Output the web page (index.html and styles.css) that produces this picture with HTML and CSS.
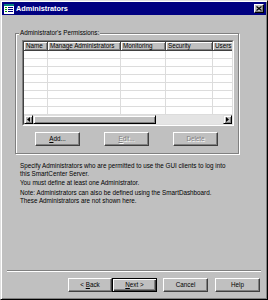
FILE: index.html
```html
<!DOCTYPE html>
<html>
<head>
<meta charset="utf-8">
<link rel="stylesheet" href="styles.css">
</head>
<body>
<div class="window">
  <div class="titlebar">
    <svg class="appicon" width="10" height="10" viewBox="0 0 10 10">
      <rect x="0" y="0" width="10" height="10" fill="#ffffff"/>
      <rect x="0" y="0" width="10" height="2" fill="#008080"/>
      <rect x="1" y="3" width="2" height="1" fill="#00a000"/>
      <rect x="4" y="3" width="5" height="1" fill="#000080"/>
      <rect x="1" y="5" width="2" height="1" fill="#00a000"/>
      <rect x="4" y="5" width="5" height="1" fill="#000080"/>
      <rect x="1" y="7" width="2" height="1" fill="#00a000"/>
      <rect x="4" y="7" width="5" height="1" fill="#000080"/>
    </svg>
    <span class="title">Administrators</span>
    <div class="close">
      <svg width="6" height="5" viewBox="0 0 6 5"><path d="M0.5 0.5 L5.5 4.5 M5.5 0.5 L0.5 4.5" stroke="#000" stroke-width="1.2"/></svg>
    </div>
  </div>
  <div class="body">
    <fieldset class="group">
      <legend class="group-label">Administrator's Permissions:</legend>
      <div class="listview">
        <div class="listview-inner">
          <div class="lv-header">
            <div class="hcell c1">Name</div>
            <div class="hcell c2">Manage Administrators</div>
            <div class="hcell c3">Monitoring</div>
            <div class="hcell c4">Security</div>
            <div class="hcell c5">Users</div>
          </div>
          <div class="lv-rows">
            <div class="lv-row"><div class="cell c1"></div><div class="cell c2"></div><div class="cell c3"></div><div class="cell c4"></div><div class="cell c5"></div></div>
            <div class="lv-row"><div class="cell c1"></div><div class="cell c2"></div><div class="cell c3"></div><div class="cell c4"></div><div class="cell c5"></div></div>
            <div class="lv-row"><div class="cell c1"></div><div class="cell c2"></div><div class="cell c3"></div><div class="cell c4"></div><div class="cell c5"></div></div>
            <div class="lv-row"><div class="cell c1"></div><div class="cell c2"></div><div class="cell c3"></div><div class="cell c4"></div><div class="cell c5"></div></div>
            <div class="lv-row"><div class="cell c1"></div><div class="cell c2"></div><div class="cell c3"></div><div class="cell c4"></div><div class="cell c5"></div></div>
            <div class="lv-row"><div class="cell c1"></div><div class="cell c2"></div><div class="cell c3"></div><div class="cell c4"></div><div class="cell c5"></div></div>
            <div class="lv-row"><div class="cell c1"></div><div class="cell c2"></div><div class="cell c3"></div><div class="cell c4"></div><div class="cell c5"></div></div>
            <div class="lv-row"><div class="cell c1"></div><div class="cell c2"></div><div class="cell c3"></div><div class="cell c4"></div><div class="cell c5"></div></div>
          </div>
          <div class="hscroll">
            <div class="sb-btn"><svg width="3" height="5" viewBox="0 0 3 5"><path d="M3 0 L0 2.5 L3 5 Z" fill="#000"/></svg></div>
            <div class="sb-track"><div class="sb-thumb"></div></div>
            <div class="sb-btn"><svg width="3" height="5" viewBox="0 0 3 5"><path d="M0 0 L3 2.5 L0 5 Z" fill="#000"/></svg></div>
          </div>
        </div>
      </div>
      <div class="group-buttons">
        <div class="btn"><span><u>A</u>dd...</span></div>
        <div class="btn disabled"><span><u>E</u>dit...</span></div>
        <div class="btn disabled"><span>Delete</span></div>
      </div>
    </fieldset>
    <div class="desc">
      <p>Specify Administrators who are permitted to use the GUI clients to log into<br>this SmartCenter Server.<br>You must define at least one Administrator.</p>
      <p>Note: Administrators can also be defined using the SmartDashboard.<br>These Administrators are not shown here.</p>
    </div>
    <div class="separator"></div>
    <div class="footer">
      <div class="btn back"><span>&lt; <u>B</u>ack</span></div>
      <div class="btn default"><span><u>N</u>ext &gt;</span></div>
      <div class="btn cancel"><span>Cancel</span></div>
      <div class="btn help"><span>Help</span></div>
    </div>
  </div>
</div>
</body>
</html>
```

FILE: styles.css
```css
* { box-sizing: border-box; }
html, body { margin: 0; padding: 0; background: #000; }
body { font-family: "Liberation Sans", Arial, sans-serif; font-size: 6.3px; color: #000; }

.window {
  width: 268px;
  height: 300px;
  background: #c0c0c0;
  border: 1px solid;
  border-color: #dfdfdf #000 #000 #dfdfdf;
  box-shadow: inset 1px 1px #fff, inset -1px -1px #808080;
  padding: 1px;
  display: flex;
  flex-direction: column;
}

.titlebar {
  height: 13px;
  background: #000080;
  display: flex;
  align-items: center;
  padding: 0 2px 0 2px;
  flex: none;
}
.appicon { display: block; flex: none; }
.title {
  color: #fff;
  font-weight: bold;
  font-size: 7.3px;
  margin-left: 2px;
  flex: 1;
  line-height: 13px;
}
.close {
  width: 10px;
  height: 9px;
  background: #c0c0c0;
  border: 1px solid;
  border-color: #fff #000 #000 #fff;
  box-shadow: inset -1px -1px #808080;
  display: flex;
  align-items: center;
  justify-content: center;
}
.close svg { display: block; }

.body {
  flex: 1;
  display: flex;
  flex-direction: column;
  padding: 14px 0 6px 0;
}

.group {
  margin: 0 0 0 13px;
  width: 224px;
  min-width: 0;
  padding: 3px 3px 7px 6px;
  border: 1px solid #808080;
  box-shadow: inset 1px 1px #fff, 1px 1px #fff;
}
.group-label {
  padding: 0 1px;
  margin-left: -3px;
  line-height: 8px;
  background: #c0c0c0;
}

.listview {
  width: 212px;
  border: 1px solid;
  border-color: #808080 #fff #fff #808080;
}
.listview-inner {
  border: 1px solid;
  border-color: #404040 #dfdfdf #dfdfdf #404040;
  background: #fff;
  overflow: hidden;
}
.lv-header, .lv-row { display: flex; white-space: nowrap; }
.hcell {
  flex: none;
  height: 9px;
  line-height: 8px;
  padding-left: 2px;
  background: #c0c0c0;
  border-right: 1px solid #404040;
  border-bottom: 1px solid #404040;
  box-shadow: inset 1px 1px #fff, inset -1px -1px #808080;
  overflow: hidden;
}
.c1 { width: 24px; }
.c2 { width: 73px; }
.c3 { width: 45px; }
.c4 { width: 47px; }
.c5 { width: 30px; }
.cell {
  flex: none;
  height: 8px;
  border-right: 1px solid #dcdcdc;
  border-bottom: 1px solid #dcdcdc;
}

.hscroll {
  display: flex;
  height: 9px;
  background: #c0c0c0;
}
.sb-btn {
  width: 9px;
  height: 9px;
  flex: none;
  border: 1px solid;
  border-color: #dfdfdf #000 #000 #dfdfdf;
  box-shadow: inset 1px 1px #fff, inset -1px -1px #808080;
  display: flex;
  align-items: center;
  justify-content: center;
}
.sb-btn svg { display: block; }
.sb-track {
  flex: 1;
  background: #e4e4e4;
  display: flex;
}
.sb-thumb {
  width: 123px;
  height: 9px;
  background: #c0c0c0;
  border: 1px solid;
  border-color: #dfdfdf #000 #000 #dfdfdf;
  box-shadow: inset 1px 1px #fff, inset -1px -1px #808080;
}

.group-buttons {
  display: flex;
  gap: 24px;
  padding-left: 13px;
  margin-top: 6px;
}

.btn {
  width: 45px;
  height: 14px;
  background: #c0c0c0;
  border: 1px solid;
  border-color: #fff #404040 #404040 #fff;
  box-shadow: inset -1px -1px #808080;
  display: flex;
  align-items: center;
  justify-content: center;
  line-height: 8px;
  white-space: nowrap;
  flex: none;
}
.btn.disabled { color: #808080; text-shadow: 1px 1px 0 #fff; }
.btn.default {
  border-color: #000;
  box-shadow: inset 1px 1px #fff, inset -1px -1px #404040, inset -2px -2px #808080;
}
.btn.back { width: 44px; }
.btn.cancel { margin-left: 6px; }
.btn.help { margin-left: 7px; }

.desc {
  margin: 8px 0 0 18px;
  line-height: 8.3px;
  white-space: nowrap;
}
.desc p { margin: 0 0 2px 0; }

.separator {
  margin: auto 5px 0 5px;
  height: 2px;
  border-top: 1px solid #808080;
  border-bottom: 1px solid #fff;
}
.footer {
  display: flex;
  justify-content: flex-end;
  padding-right: 6px;
  margin-top: 6px;
}
```
